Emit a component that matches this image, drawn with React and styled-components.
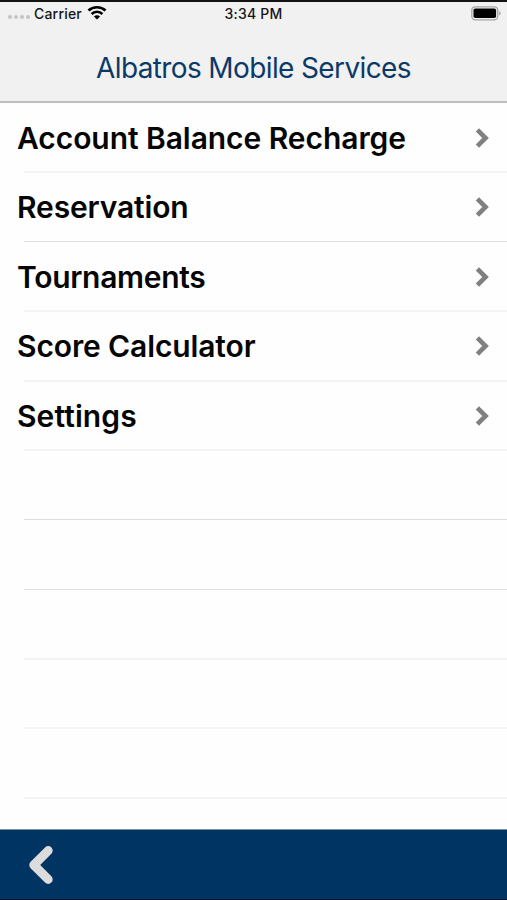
import React from 'react'
import styled, { createGlobalStyle } from 'styled-components'

const items = [
    { label: 'Account Balance Recharge', height: 70, spacing: '-0.06px', drop: 1 },
    { label: 'Reservation', height: 69, thin: true, spacing: '-0.15px' },
    { label: 'Tournaments', height: 70, spacing: '-0.3px', drop: 1 },
    { label: 'Score Calculator', height: 70, spacing: '-0.12px' },
    { label: 'Settings', height: 69, spacing: '0.1px' },
    { height: 69, thin: true },
    { height: 70, thin: true },
    { height: 70 },
    { height: 69 },
    { height: 70 },
]

const Chevron = () => (
    <svg width="16" height="22" viewBox="0 0 16 22" fill="none">
        <path d="M2.4 2.8L10.6 11L2.4 19.2" stroke="#808080" strokeWidth="4.6" />
    </svg>
)

const WifiIcon = () => (
    <svg width="20" height="16" viewBox="0 0 20 16" fill="none" stroke="#000">
        <path d="M1.5 5.6C6.2 1.1 13.8 1.1 18.5 5.6" strokeWidth="2.7" />
        <path d="M4.6 9C7.6 6.1 12.4 6.1 15.4 9" strokeWidth="2.5" />
        <path d="M10 14.6L6.9 11.5C8.6 9.9 11.4 9.9 13.1 11.5Z" fill="#000" stroke="none" />
    </svg>
)

const BatteryIcon = () => (
    <svg width="31" height="15" viewBox="0 0 31 15">
        <rect x="0.8" y="0.8" width="26" height="13" rx="3.5" fill="#f1f1f1" stroke="#a6a6a6" strokeWidth="1.3" />
        <rect x="2.5" y="2.5" width="22.6" height="9.6" rx="1.8" fill="#000" />
        <path d="M28.2 5.2C30.2 5.8 30.2 8.8 28.2 9.4Z" fill="#a6a6a6" />
    </svg>
)

const BackIcon = () => (
    <svg width="26" height="40" viewBox="0 0 26 40" fill="none">
        <path d="M20.2 5.6L5.8 20L20.2 34.4" stroke="#dcdcdc" strokeWidth="9" strokeLinecap="round" strokeLinejoin="round" />
    </svg>
)

const App = () => {
    return (
        <Screen>
            <GlobalStyle />
            <Header>
                <StatusBar>
                    <Carrier>
                        <Signal>
                            <Dot />
                            <Dot />
                            <Dot />
                            <Dot />
                        </Signal>
                        <span>Carrier</span>
                        <WifiIcon />
                    </Carrier>
                    <Time>3:34 PM</Time>
                    <Battery>
                        <BatteryIcon />
                    </Battery>
                </StatusBar>
                <Title>Albatros Mobile Services</Title>
            </Header>

            <List>
                {items.map((item, i) => (
                    <Row key={i} $height={item.height}>
                        <RowBody $drop={item.drop}>
                            {item.label && <Label $spacing={item.spacing}>{item.label}</Label>}
                            {item.label && <Chevron />}
                        </RowBody>
                        <Separator $thin={item.thin} />
                    </Row>
                ))}
            </List>

            <Footer>
                <BackButton aria-label="Back">
                    <BackIcon />
                </BackButton>
            </Footer>
        </Screen>
    )
}

export default App


const GlobalStyle = createGlobalStyle`
   body {
    margin: 0;
    background-color: #fefefe;
   }
`

const Screen = styled.div`
   width: 507px;
   height: 900px;
   box-sizing: border-box;
   display: flex;
   flex-direction: column;
   overflow: hidden;
   background-color: #fefefe;
   font-family: Inter, "Liberation Sans", sans-serif;
`

const Header = styled.header`
   height: 103px;
   box-sizing: border-box;
   flex-shrink: 0;
   display: flex;
   flex-direction: column;
   background-color: #f1f1f1;
   border-top: 2px solid #141214;
   border-bottom: 2px solid #bebebe;
`

const StatusBar = styled.div`
   height: 22px;
   display: grid;
   grid-template-columns: 1fr auto 1fr;
   align-items: center;
   padding: 0 5px 0 8px;
   font-size: 14px;
   font-weight: 500;
   color: #161616;
`

const Carrier = styled.div`
   display: flex;
   align-items: center;
   letter-spacing: 0.2px;

   svg {
    margin-left: 5px;
   }
`

const Signal = styled.div`
   display: flex;
   gap: 2px;
   width: 26px;
   padding-top: 8px;
`

const Dot = styled.i`
   width: 4px;
   height: 4px;
   border-radius: 50%;
   background-color: #c4c4c4;
`

const Time = styled.div`
   padding-right: 3px;
   letter-spacing: 0.2px;
`

const Battery = styled.div`
   display: flex;
   justify-content: flex-end;
`

const Title = styled.h1`
   margin: 0;
   padding-top: 27px;
   font-size: 28px;
   line-height: 34px;
   font-weight: 400;
   letter-spacing: -0.62px;
   text-align: center;
   white-space: nowrap;
   color: #0b3a68;
`

const List = styled.main`
   flex: 1;
   min-height: 0;
`

const Row = styled.div`
   height: ${(props) => props.$height}px;
   display: flex;
   flex-direction: column;
`

const RowBody = styled.div`
   flex: 1;
   display: flex;
   align-items: center;
   justify-content: space-between;
   padding: ${(props) => (props.$drop ? 2 : 0)}px 16px 0 17px;
`

const Label = styled.span`
   font-size: 30px;
   line-height: 36px;
   font-weight: 600;
   letter-spacing: ${(props) => props.$spacing || '0'};
   white-space: nowrap;
   color: #060606;
`

const Separator = styled.div`
   height: ${(props) => (props.$thin ? 1 : 2)}px;
   margin-left: 24px;
   background-color: ${(props) => (props.$thin ? '#dedede' : '#f4f4f4')};
`

const Footer = styled.footer`
   height: 71px;
   box-sizing: border-box;
   flex-shrink: 0;
   display: flex;
   align-items: center;
   padding-left: 28px;
   background-color: #003462;
   border-top: 1px solid #7890ac;
   border-bottom: 1px solid #00102a;
`

const BackButton = styled.button`
   display: flex;
   padding: 0;
   border: none;
   background: none;
`
